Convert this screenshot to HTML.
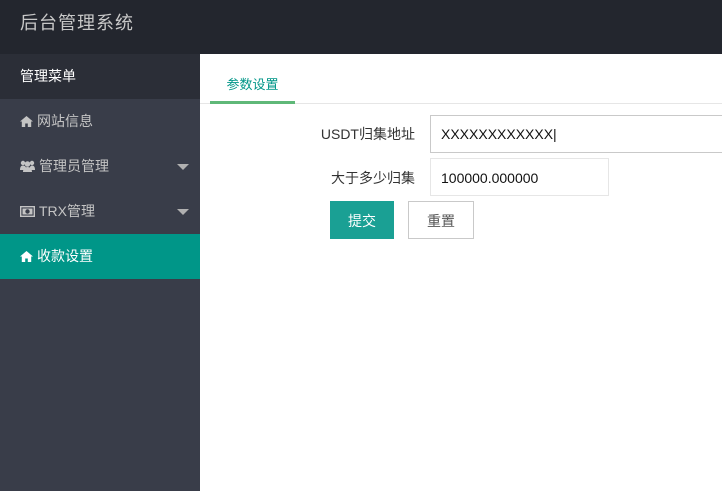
<!DOCTYPE html>
<html><head><meta charset="utf-8"><style>
*{margin:0;padding:0;box-sizing:border-box}
body{width:722px;height:491px;overflow:hidden;font-family:"Liberation Sans","Noto Sans CJK SC",sans-serif;font-size:14px;background:#fff;position:relative}
.hd{position:absolute;left:0;top:0;width:722px;height:54px;background:#23262e;color:#c8c8c8;font-size:18px;line-height:46px;padding-left:20px;letter-spacing:1px}
.sd{position:absolute;left:0;top:54px;width:200px;height:437px;background:#393d49}
.sd div{height:45px;line-height:45px;padding-left:20px;color:#c4c4c4;position:relative}
.sd .t{background:#2b2e37;color:#fff}
.sd .a{background:#009688;color:#fff}
.ar{position:absolute;right:11px;top:20px;width:0;height:0;border-left:6px solid transparent;border-right:6px solid transparent;border-top:6px solid #b0b0b0}
.sd svg{vertical-align:-1px;margin-right:4px}
.tab{position:absolute;left:210px;top:74px;width:85px;text-align:center;color:#009688;font-size:13px}
.ul{position:absolute;left:210px;top:101px;width:85px;height:3px;background:#5fb878}
.ln{position:absolute;left:200px;top:103px;width:522px;height:1px;background:#e6e6e6}
.lb{position:absolute;width:120px;text-align:right;left:295px;color:#333}
.in{position:absolute;left:430px;border:1px solid #e6e6e6;padding-left:10px;color:#111;font-size:14px}
.b{position:absolute;top:201px;height:38px;line-height:38px;text-align:center;font-size:14px}
</style></head><body>
<div class="hd">后台管理系统</div>
<div class="sd">
<div class="t">管理菜单</div>
<div><svg width="13" height="11" viewBox="0 0 13 11"><path d="M6.5 0L0 5.5h1.8V11h3.4V7.5h2.6V11h3.4V5.5H13z" fill="#c4c4c4"/></svg>网站信息</div>
<div><svg width="15" height="12" viewBox="0 0 15 12"><circle cx="3" cy="3" r="2.2" fill="#c4c4c4"/><circle cx="12" cy="3" r="2.2" fill="#c4c4c4"/><circle cx="7.5" cy="4" r="2.8" fill="#c4c4c4"/><path d="M0 10c0-3 1-4.5 3-4.5S6 7 6 8v2zM9 10c0-1 1-4.5 3-4.5s3 1.5 3 4.5zM3 12c0-3 2-5 4.5-5s4.5 2 4.5 5z" fill="#c4c4c4"/></svg>管理员管理<span class="ar"></span></div>
<div><svg width="15" height="11" viewBox="0 0 15 11"><rect x="0.7" y="0.7" width="13.6" height="9.6" fill="none" stroke="#c4c4c4" stroke-width="1.4"/><rect x="2.5" y="2.5" width="10" height="6" fill="#c4c4c4"/><circle cx="7.5" cy="5.5" r="2.2" fill="#393d49"/></svg>TRX管理<span class="ar"></span></div>
<div class="a"><svg width="13" height="11" viewBox="0 0 13 11"><path d="M6.5 0L0 5.5h1.8V11h3.4V7.5h2.6V11h3.4V5.5H13z" fill="#fff"/></svg>收款设置</div>
</div>
<div class="tab">参数设置</div>
<div class="ln"></div><div class="ul"></div>
<div class="lb" style="top:124px">USDT归集地址</div>
<div class="in" style="top:115px;width:300px;height:38px;line-height:36px;border-color:#c9c9c9">XXXXXXXXXXXX|</div>
<div class="lb" style="top:168px">大于多少归集</div>
<div class="in" style="top:158px;width:179px;height:38px;line-height:38px">100000.000000</div>
<div class="b" style="left:330px;width:64px;background:#1aa094;color:#fff;padding-top:1px">提交</div>
<div class="b" style="left:408px;width:66px;border:1px solid #c9c9c9;color:#555">重置</div>
</body></html>
